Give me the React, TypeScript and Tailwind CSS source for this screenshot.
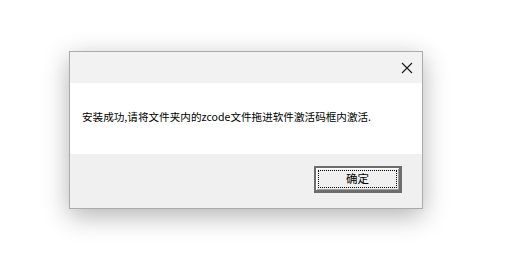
export default function App() {
  return (
    <div className="w-[522px] h-[262px] bg-white overflow-hidden pl-[69px] pt-[51px]" style={{ fontFamily: '"Noto Sans CJK SC", "Noto Sans", sans-serif' }}>
      <div className="w-[354px] border border-[#ababab] bg-[#f0f0f0] shadow-[0_7px_24px_rgba(0,0,0,0.3)] flex flex-col">
        <div className="h-[31px] bg-[#f2f2f2] flex items-start justify-end pr-[9px] pt-[10px]">
          <svg width="12" height="12" viewBox="0 0 12 12">
            <path d="M1 1 L11 11 M11 1 L1 11" stroke="#1a1a1a" strokeWidth="1.1" fill="none" />
          </svg>
        </div>
        <div className="h-[71px] bg-white flex items-center pl-[12px] pb-[2px]">
          <span className="text-[10.6px] leading-none text-black whitespace-nowrap">安装成功,请将文件夹内的zcode文件拖进软件激活码框内激活.</span>
        </div>
        <div className="h-[54px] flex justify-end items-start pt-[12px] pr-[20px]">
          <div className="w-[88px] h-[27px] border-2 border-[#6d6d6d] border-r-[3px] border-b-[3px] bg-[#f0f0f0] shadow-[inset_1px_1px_0_#ffffff,inset_-1px_-1px_0_#a0a0a0] p-[2px]">
            <div className="w-full h-full border border-dotted border-black flex items-center justify-center">
              <span className="text-[11.5px] leading-none text-black">确定</span>
            </div>
          </div>
        </div>
      </div>
    </div>
  );
}
